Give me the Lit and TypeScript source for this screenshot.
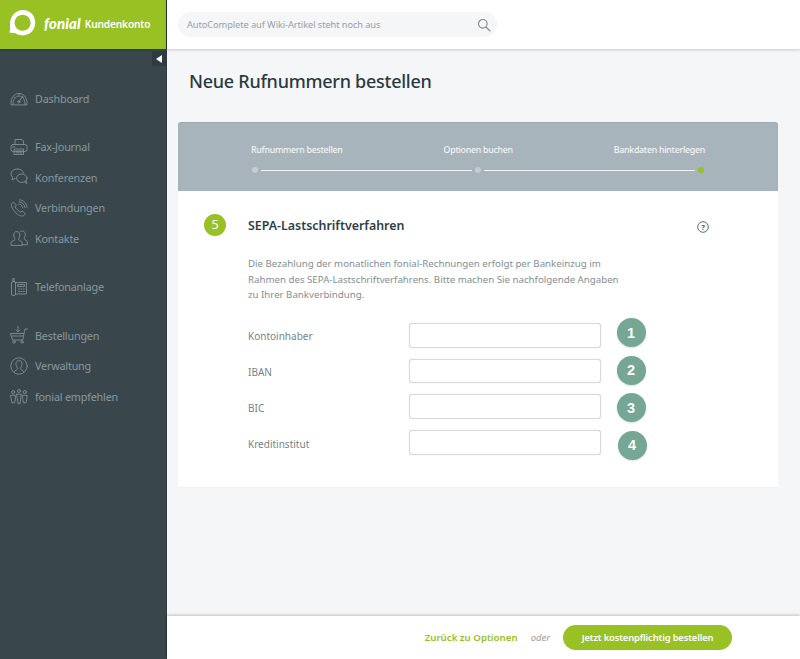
import { LitElement, html, css, svg } from "lit";
import { customElement } from "lit/decorators.js";

const ic = (body: unknown) => html`<svg class="ico" viewBox="0 0 18 18" fill="none" stroke="currentColor" stroke-width="0.9" stroke-linecap="round" stroke-linejoin="round">${body}</svg>`;

const icons: Record<string, unknown> = {
  dash: svg`<path d="M1 15.5 C0.5 9 4 4.5 9 4.5 S17.5 9 17 15.5 Z"/><path d="M3 15.5 C2.8 10.5 5.5 7 9 7 S15.2 10.5 15 15.5"/><path d="M9 12.5 L12.5 7.5"/><circle cx="8.8" cy="12.8" r="1.1"/><path d="M4.5 8 L5.5 9 M9 4.5 V6 M13.5 8 L12.8 8.8"/>`,
  fax: svg`<path d="M5 6.5 V1.5 H12 L13.5 3 V6.5"/><rect x="1" y="6.5" width="16" height="7" rx="2"/><path d="M4.5 11 H13.5 V16.5 H4.5 Z M6 13 H12 M6 14.8 H12 M2.5 9 H5"/>`,
  conf: svg`<path d="M7.5 1 C3.8 1 1 3 1 6 C1 7.6 1.8 8.8 3 9.6 L1.8 11.8 L5.2 10.6"/><path d="M7.5 1 C10.6 1 13 2.6 13.6 5"/><ellipse cx="11.8" cy="10.2" rx="5.2" ry="4.2"/><path d="M14.5 13.7 L16.6 15.8 L16.2 12.8"/>`,
  conn: svg`<path d="M3 3.5 L1.5 5 C0.8 7 3 11 6 14 S12.5 17.6 14 16.5 L15.5 15 L12.5 12 L10.8 13.2 C9 12.5 6 9.6 5 7.8 L6.2 6.2 Z"/><path d="M9 5 C11 5.2 12.6 6.8 12.8 9 M9.2 2.8 C12.2 3 14.8 5.6 15 8.6 M9.6 0.8 C13.4 1 16.8 4.4 17 8.2"/>`,
  cont: svg`<path d="M1 16 V13.5 C1 12 4.5 11.6 5 10.5 C5.2 9.8 4 8.8 3.8 7 C3.5 4.5 4.5 2.5 6.8 2.5 S10 4.5 9.8 7 C9.6 8.8 8.5 9.8 8.7 10.5 C9 11.6 12.2 12 12.2 13.5 V16 Z"/><path d="M10.2 2.8 C10.8 2.2 11.4 2 12.2 2 C14.5 2 15.4 4 15.2 6.5 C15 8.2 14 9.2 14.2 10 C14.5 11 17.4 11.4 17.4 13 V15.8 H12.4"/>`,
  tel: svg`<rect x="1.5" y="3.5" width="4" height="14" rx="1.5"/><path d="M2.8 3.5 V0.5 H4.2 V3.5"/><path d="M5.5 4.5 H16.5 V16 H5.5"/><rect x="8" y="6.5" width="6.5" height="2"/><path d="M8.5 11 H9.5 M11 11 H12 M13.5 11 H14.5 M8.5 13.5 H9.5 M11 13.5 H12 M13.5 13.5 H14.5"/>`,
  cart: svg`<path d="M0.8 7.5 H14 L12.8 14 H3 Z"/><path d="M14 7.5 L15 3 H17.5"/><path d="M2 10 H13.4"/><circle cx="4" cy="16" r="1.2"/><circle cx="12" cy="16" r="1.2"/><path d="M8 0.5 V5.5 M6 3.8 L8 5.8 L10 3.8"/>`,
  admin: svg`<circle cx="9" cy="9" r="8.2"/><path d="M4.5 14.5 C5 13 7.5 12.8 7.8 11.8 C7.9 11 6.2 9.5 6 7.5 C5.7 5 7 3.6 9 3.6 S12.3 5 12 7.5 C11.8 9.5 10.1 11 10.2 11.8 C10.5 12.8 13 13 13.5 14.5"/>`,
  rec: svg`<circle cx="9" cy="4" r="1.5"/><circle cx="3.2" cy="5" r="1.5"/><circle cx="14.8" cy="5" r="1.5"/><path d="M6.8 7.2 H11.2 L10.6 12 L10 16.8 H8 L7.4 12 Z"/><path d="M1 8.2 H5.4 V12 L4.6 15.8 H2 L1.2 12 Z M12.6 8.2 H17 L16.8 12 L16 15.8 H13.4 L12.6 12 Z"/>`,
};

const groups = [
  [["dash", "Dashboard"]],
  [["fax", "Fax-Journal"], ["conf", "Konferenzen"], ["conn", "Verbindungen"], ["cont", "Kontakte"]],
  [["tel", "Telefonanlage"]],
  [["cart", "Bestellungen"], ["admin", "Verwaltung"], ["rec", "fonial empfehlen"]],
];

const fields = ["Kontoinhaber", "IBAN", "BIC", "Kreditinstitut"];

@customElement("app-root")
export class AppRoot extends LitElement {
  static styles = css`
    :host { display: block; width: 800px; height: 659px; overflow: hidden; font-family: "Noto Sans", "Open Sans", sans-serif; color: #2f3e46; }
    * { box-sizing: border-box; }
    .page { display: grid; grid-template-columns: 167px 1fr; height: 659px; background: #f5f6f8; }
    .side { background: #39474d; display: flex; flex-direction: column; position: relative; border-right: 1px solid #2f3b40; }
    .brand { height: 49px; background: #98c124; display: flex; align-items: center; padding: 0 0 3px 8px; color: #fff; box-shadow: 0 1px 2px rgba(0,0,0,.25); }
    .logo { width: 28px; height: 28px; margin-right: 8px; flex: none; }
    .fonial { font-family: "Lato", sans-serif; font-style: italic; font-weight: 900; font-size: 15px; margin-right: 4px; letter-spacing: .1px; }
    .kk { font-size: 10.2px; font-weight: 600; letter-spacing: -.2px; padding-top: 1px; }
    .toggle { position: absolute; top: 51px; right: 0; width: 14px; height: 15px; background: #2f3b40; display: flex; align-items: center; justify-content: center; }
    .toggle i { border-style: solid; border-width: 4px 6px 4px 0; border-color: transparent #fff transparent transparent; }
    nav { display: flex; flex-direction: column; gap: 18px; padding-top: 34px; }
    .item { height: 30.5px; display: flex; align-items: center; padding-left: 10px; color: #87979c; font-size: 10.8px; letter-spacing: -.2px; }
    .ico { width: 18px; height: 18px; margin-right: 7px; flex: none; color: #7f8f94; }
    .main { display: flex; flex-direction: column; min-width: 0; }
    .top { height: 49px; background: #fff; box-shadow: 0 1px 3px rgba(0,0,0,.18); display: flex; align-items: center; padding-left: 11px; flex: none; position: relative; }
    .search { width: 319px; height: 25px; border-radius: 13px; background: #f5f6f8; display: flex; align-items: center; justify-content: space-between; padding: 0 6px 0 9px; font-size: 9.3px; letter-spacing: -.1px; color: #9aa0a5; }
    .search svg { width: 14px; height: 14px; color: #7d8a90; }
    .content { flex: 1; padding: 0 22px 0 11px; min-height: 0; }
    h1 { margin: 0; padding: 20px 0 0 11px; height: 73px; font-size: 18px; line-height: 24px; font-weight: 500; letter-spacing: -.26px; color: #2a3a42; }
    .card { background: #fff; border-radius: 3px 3px 0 0; height: 365px; box-shadow: 0 1px 1px rgba(0,0,0,.03); }
    .steps { height: 69px; background: #a8b4bc; border-radius: 3px 3px 0 0; padding: 21px 73px 0; color: #f2f4f5; border-top: 1px solid #9eabb3; }
    .labels { display: flex; justify-content: space-between; font-size: 8.8px; font-weight: 500; letter-spacing: -.27px; line-height: 13px; }
    .track { display: flex; align-items: center; margin: 10px 1px 0; gap: 3px; }
    .dot { width: 6px; height: 6px; border-radius: 50%; background: #c4ccd3; flex: none; }
    .dot.on { background: #98c124; }
    .line { flex: 1; height: 1px; background: #f0f2f3; }
    .body { padding: 22px 0 0 26px; position: relative; }
    .head { display: flex; align-items: center; height: 23px; }
    .num { width: 22px; height: 22px; border-radius: 50%; background: #98c124; color: #fff; display: flex; align-items: center; justify-content: center; font-size: 12.5px; flex: none; margin-right: 22px; }
    h2 { margin: 0; padding-top: 2px; font-size: 12.4px; font-weight: 600; color: #2f3e46; }
    .help { position: absolute; left: 519px; top: 30px; width: 12px; height: 12px; color: #4e5c63; }
    .text { margin: 20px 0 0 44px; width: 380px; font-size: 9.7px; line-height: 15.7px; color: #838e94; }
    .form { margin: 20px 0 0 44px; display: flex; flex-direction: column; gap: 11px; }
    .row { display: flex; align-items: center; height: 24.7px; position: relative; font-size: 10px; color: #76838a; }
    .row label { width: 161px; flex: none; padding-top: 2px; }
    .row input { width: 192px; height: 24.7px; border: 1px solid #d9d9d9; border-radius: 3px; background: #fff; box-shadow: 0 0 1px #ccc; padding: 0; }
    .mark { position: absolute; left: 368.5px; width: 29px; height: 29px; border-radius: 50%; background: #76a794; color: #fff; font-family: "Liberation Sans", sans-serif; font-weight: 700; font-size: 14.5px; display: flex; align-items: center; justify-content: center; box-shadow: 0 1px 2px rgba(0,0,0,.15); }
    .m0 { top: -5px; } .m1 { top: -3px; } .m2 { top: -1px; } .m3 { top: .5px; left: 369.5px; }
    .foot { height: 43px; background: #fff; box-shadow: 0 -1px 3px rgba(0,0,0,.22); display: flex; align-items: center; justify-content: flex-end; padding-right: 68px; flex: none; position: relative; }
    .back { color: #98c124; font-size: 9.7px; font-weight: 600; }
    .or { color: #9a9a9a; font-style: italic; font-size: 9.5px; margin: 0 13px; }
    .cta { width: 169px; height: 24.5px; border-radius: 13px; background: #98c124; color: #fff; font-size: 9.4px; font-weight: 600; letter-spacing: -.15px; display: flex; align-items: center; justify-content: center; border: 0; font-family: inherit; }
  `;

  render() {
    return html`<div class="page">
      <aside class="side">
        <div class="brand">
          <svg class="logo" viewBox="0 0 28 28"><path fill="#fff" fill-rule="evenodd" d="M15 1 C22 1 27.2 6.2 27.2 13.6 C27.2 21 22 26.4 15 26.4 C12 26.4 9.5 25.5 7.5 24.2 L1.2 23.4 C2.4 21.6 2.2 19.4 2 16.8 C1.4 8 7 1 15 1 Z M14.6 5.8 C10.2 5.8 6.6 9.4 6.6 13.8 C6.6 18.2 10.2 21.8 14.6 21.8 C19 21.8 22.6 18.2 22.6 13.8 C22.6 9.4 19 5.8 14.6 5.8 Z"/></svg>
          <span class="fonial">fonial</span><span class="kk">Kundenkonto</span>
        </div>
        <div class="toggle"><i></i></div>
        <nav>
          ${groups.map((g) => html`<div>${g.map(([i, t]) => html`<div class="item">${ic(icons[i])}<span>${t}</span></div>`)}</div>`)}
        </nav>
      </aside>
      <div class="main">
        <header class="top">
          <div class="search"><span>AutoComplete auf Wiki-Artikel steht noch aus</span>
            <svg viewBox="0 0 14 14" fill="none" stroke="currentColor" stroke-width="1.1" stroke-linecap="round"><circle cx="5.8" cy="5.8" r="4.3"/><path d="M9 9 L13 13"/></svg>
          </div>
        </header>
        <main class="content">
          <h1>Neue Rufnummern bestellen</h1>
          <section class="card">
            <div class="steps">
              <div class="labels"><span>Rufnummern bestellen</span><span>Optionen buchen</span><span>Bankdaten hinterlegen</span></div>
              <div class="track"><span class="dot"></span><span class="line"></span><span class="dot"></span><span class="line"></span><span class="dot on"></span></div>
            </div>
            <div class="body">
              <div class="head"><span class="num">5</span><h2>SEPA-Lastschriftverfahren</h2></div>
              <svg class="help" viewBox="0 0 12 12" fill="none" stroke="currentColor"><circle cx="6" cy="6" r="5.3" stroke-width=".9"/><text x="6" y="8.6" text-anchor="middle" font-size="7.5" font-weight="700" fill="currentColor" stroke="none" font-family="Noto Sans">?</text></svg>
              <p class="text">Die Bezahlung der monatlichen fonial-Rechnungen erfolgt per Bankeinzug im Rahmen des SEPA-Lastschriftverfahrens. Bitte machen Sie nachfolgende Angaben zu Ihrer Bankverbindung.</p>
              <div class="form">
                ${fields.map((f, i) => html`<div class="row"><label>${f}</label><input type="text" aria-label=${f} /><span class="mark m${i}">${i + 1}</span></div>`)}
              </div>
            </div>
          </section>
        </main>
        <footer class="foot"><span class="back">Zurück zu Optionen</span><span class="or">oder</span><button class="cta">Jetzt kostenpflichtig bestellen</button></footer>
      </div>
    </div>`;
  }
}
